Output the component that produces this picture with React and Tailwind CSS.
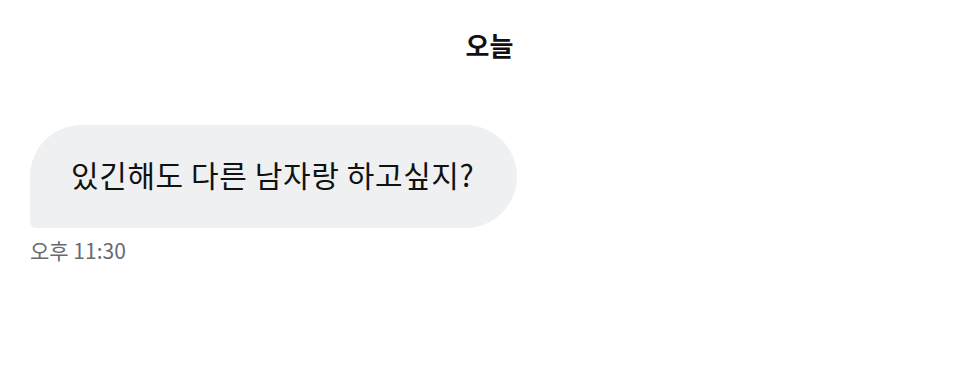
export default function App() {
  return (
    <div
      className="flex h-[365px] w-[979px] flex-col bg-white text-[#111]"
      style={{ fontFamily: '"Noto Sans CJK KR", "Noto Sans", sans-serif' }}
    >
      {/* 날짜 헤더 */}
      <div className="flex justify-center pt-[28px]">
        <span className="text-[26px] font-bold leading-[34px]">오늘</span>
      </div>

      {/* 메시지 */}
      <div className="flex flex-col items-start px-[30px] pt-[63px]">
        <div className="flex h-[103px] items-center rounded-[52px] rounded-bl-[6px] bg-[#eef0f2] pb-[5px] pl-[41px] pr-[43px]">
          <span className="text-[30px] leading-none tracking-[0.6px]">있긴해도 다른 남자랑 하고싶지?</span>
        </div>
        <span className="mt-[9px] text-[21px] leading-[26px] text-[#666b70]">오후 11:30</span>
      </div>
    </div>
  );
}
